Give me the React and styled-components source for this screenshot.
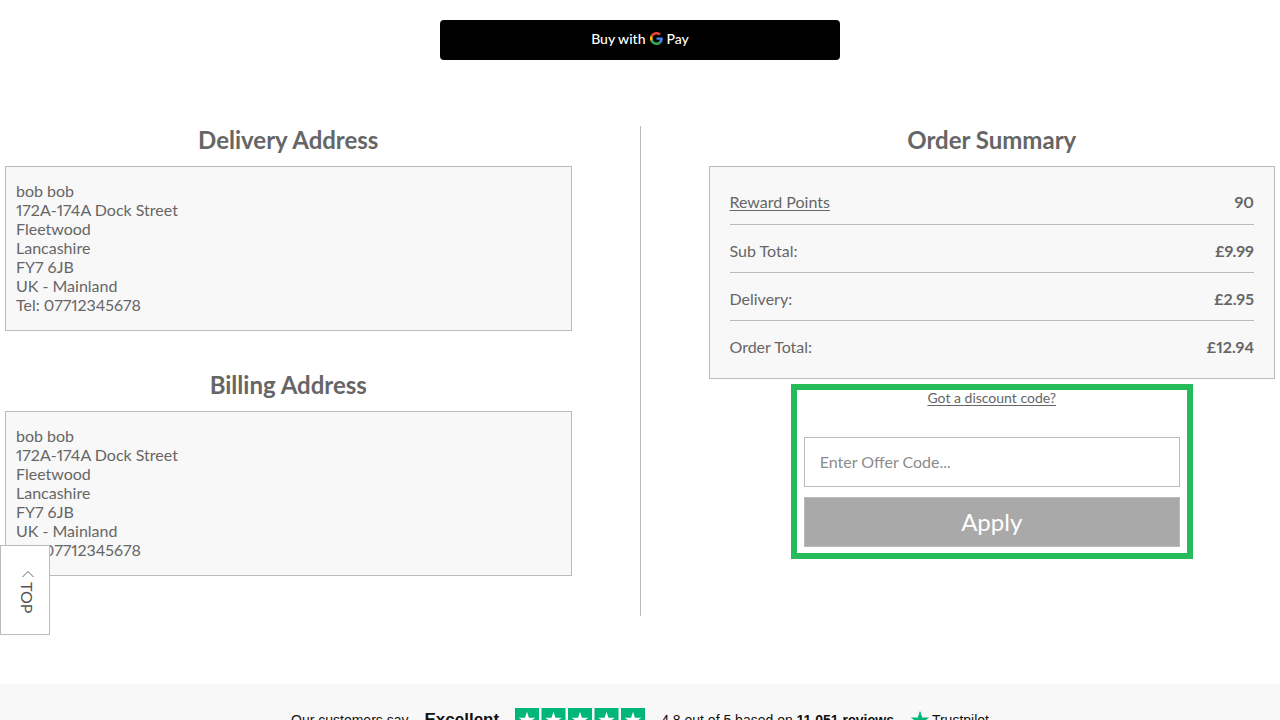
import React, { useState } from 'react';
import styled, { createGlobalStyle } from 'styled-components';

const GlobalStyle = createGlobalStyle`
  html {
    scrollbar-width: none;
  }
  body {
    margin: 0;
    background: #fff;
    color: #666;
    font-family: Lato, 'Open Sans', sans-serif;
    font-size: 16px;
    font-variant-numeric: proportional-nums;
    line-height: 19px;
  }
  * {
    box-sizing: border-box;
  }
`;

const PayButton = styled.button`
  display: flex;
  justify-content: center;
  align-items: center;
  gap: 5px;
  width: calc(100% - 40px);
  max-width: 400px;
  height: 40px;
  margin: 20px auto 66px;
  padding: 0 0 4px;
  border: none;
  border-radius: 4px;
  background: #000;
  color: #fff;
  font-family: Lato, sans-serif;
  font-size: 14px;
  font-weight: 500;
  cursor: pointer;
`;

const PayMark = styled.span`
  display: flex;
  align-items: center;
  gap: 3px;
`;

const Checkout = styled.main`
  display: grid;
  grid-template-columns: 1fr 1px 1fr;
  column-gap: 68px;
  padding: 0 5px;
  margin-bottom: 68px;
`;

const Column = styled.div`
  min-width: 0;
`;

const Divider = styled.div`
  background: #bbb;
`;

const Section = styled.section`
  margin-bottom: 40px;
`;

const Title = styled.h2`
  margin: 0;
  padding-bottom: 12px;
  font-size: 24px;
  line-height: 28px;
  font-weight: 700;
  text-align: center;
`;

const AddressBox = styled.address`
  padding: 14px 10px 16px;
  border: 1px solid #bbb;
  background: #f8f8f8;
  font-style: normal;
`;

const SummaryBox = styled.div`
  padding: 9px 20px 10px;
  border: 1px solid #bbb;
  background: #f8f8f8;
`;

const SummaryTable = styled.table`
  width: 100%;
  border-collapse: collapse;
`;

const SummaryRow = styled.tr`
  height: 48px;

  & + & {
    border-top: 1px solid #bbb;
  }
`;

const Label = styled.th`
  padding: 4px 0 0;
  font-weight: 400;
  text-align: left;
`;

const Amount = styled.td`
  padding: 4px 0 0;
  font-weight: 700;
  text-align: right;
`;

const TextLink = styled.a`
  color: inherit;
  text-decoration: underline;
  text-underline-offset: 2px;
`;

const Discount = styled.form`
  display: flex;
  flex-direction: column;
  max-width: 402px;
  margin: 5px auto 0;
  padding: 0 7px 6px;
  border: 6px solid #26bb5b;
`;

const DiscountLink = styled(TextLink)`
  align-self: center;
  margin-bottom: 31px;
  font-size: 14px;
  line-height: 16px;
`;

const CodeInput = styled.input`
  width: 100%;
  height: 50px;
  margin-bottom: 10px;
  padding: 0 15px 2px;
  border: 1px solid #bbb;
  border-radius: 0;
  background: #fff;
  color: #666;
  font-family: inherit;
  font-size: 16px;

  &::placeholder {
    color: #8c8c8c;
    opacity: 1;
  }
`;

const ApplyButton = styled.button`
  height: 50px;
  padding: 0 0 2px;
  border: 1px solid #bbb;
  background: #a9a9a9;
  color: #fff;
  font-family: inherit;
  font-size: 24px;
  cursor: pointer;
`;

const TopLink = styled.a`
  position: fixed;
  left: 0;
  bottom: 85px;
  display: flex;
  flex-direction: column;
  align-items: center;
  gap: 4px;
  width: 50px;
  height: 90px;
  padding: 24px 0 0 5px;
  border: 1px solid #bbb;
  background: #fff;
  color: #555;
  font-size: 16px;
  text-decoration: none;
`;

const TopText = styled.span`
  writing-mode: vertical-rl;
`;

const Reviews = styled.footer`
  display: flex;
  justify-content: center;
  align-items: center;
  gap: 16px;
  padding: 24px 0;
  background: #f8f8f8;
  color: #111;
  font-family: 'Liberation Sans', Arial, sans-serif;
  font-size: 14px;
  line-height: 24px;
`;

const Rating = styled.strong`
  font-size: 17px;
`;

const Brand = styled.span`
  display: flex;
  align-items: center;
  gap: 2px;
`;

const address = [
  'bob bob',
  '172A-174A Dock Street',
  'Fleetwood',
  'Lancashire',
  'FY7 6JB',
  'UK - Mainland',
  'Tel: 07712345678',
];

const totals = [
  { label: 'Sub Total:', value: '£9.99' },
  { label: 'Delivery:', value: '£2.95' },
  { label: 'Order Total:', value: '£12.94' },
];

const STAR = 'M12 1l2.6 8.1h8.5l-6.9 5 2.6 8.1L12 17.2l-6.8 5 2.6-8.1-6.9-5h8.5z';

const GoogleG = () => (
  <svg width="13" height="13" viewBox="0 0 48 48" aria-hidden="true">
    <path fill="#ea4335" d="M24 9.5c3.5 0 6.7 1.2 9.2 3.6l6.9-6.9C35.9 2.4 30.5 0 24 0 14.6 0 6.5 5.4 2.6 13.2l8 6.2C12.4 13.7 17.7 9.5 24 9.5z" />
    <path fill="#4285f4" d="M47 24.5c0-1.6-.2-3.1-.4-4.5H24v9h12.900c-.6 3-2.3 5.5-4.8 7.2l7.7 6C44.4 38 47 31.8 47 24.5z" />
    <path fill="#fbbc05" d="M10.5 28.6a14.5 14.5 0 0 1 0-9.2l-8-6.2a24 24 0 0 0 0 21.6z" />
    <path fill="#34a853" d="M24 48c6.5 0 11.9-2.1 15.9-5.8l-7.7-6c-2.2 1.5-4.9 2.3-8.2 2.3-6.3 0-11.6-4.2-13.5-9.9l-8 6.2C6.5 42.6 14.6 48 24 48z" />
  </svg>
);

const StarRating = () => (
  <svg width="130" height="24" viewBox="0 0 130 24" role="img" aria-label="4.8 stars">
    {[0, 1, 2, 3, 4].map((i) => (
      <g key={i} transform={`translate(${i * 26.5} 0)`}>
        <rect width="24" height="24" fill="#00b67a" />
        <path d={STAR} fill="#fff" transform="translate(3 3) scale(.75)" />
      </g>
    ))}
  </svg>
);

const AddressSection = ({ title }) => (
  <Section>
    <Title>{title}</Title>
    <AddressBox>
      {address.map((line) => (
        <div key={line}>{line}</div>
      ))}
    </AddressBox>
  </Section>
);

const App = () => {
  const [code, setCode] = useState('');

  return (
    <>
      <GlobalStyle />
      <PayButton type="button">
        Buy with
        <PayMark>
          <GoogleG />
          Pay
        </PayMark>
      </PayButton>

      <Checkout>
        <Column>
          <AddressSection title="Delivery Address" />
          <AddressSection title="Billing Address" />
        </Column>
        <Divider />
        <Column>
          <Title>Order Summary</Title>
          <SummaryBox>
            <SummaryTable>
              <tbody>
                <SummaryRow>
                  <Label scope="row">
                    <TextLink href="#rewards">Reward Points</TextLink>
                  </Label>
                  <Amount>90</Amount>
                </SummaryRow>
                {totals.map((row) => (
                  <SummaryRow key={row.label}>
                    <Label scope="row">{row.label}</Label>
                    <Amount>{row.value}</Amount>
                  </SummaryRow>
                ))}
              </tbody>
            </SummaryTable>
          </SummaryBox>
          <Discount onSubmit={(e) => e.preventDefault()}>
            <DiscountLink href="#discount">Got a discount code?</DiscountLink>
            <CodeInput
              aria-label="Offer code"
              placeholder="Enter Offer Code..."
              value={code}
              onChange={(e) => setCode(e.target.value)}
            />
            <ApplyButton type="submit">Apply</ApplyButton>
          </Discount>
        </Column>
      </Checkout>

      <Reviews>
        <span>Our customers say</span>
        <Rating>Excellent</Rating>
        <StarRating />
        <span>
          4.8 out of 5 based on <strong>11,051 reviews</strong>
        </span>
        <Brand>
          <svg width="20" height="20" viewBox="0 0 24 24" aria-hidden="true">
            <path d={STAR} fill="#00b67a" />
          </svg>
          Trustpilot
        </Brand>
      </Reviews>

      <TopLink href="#top">
        <svg width="12" height="8" viewBox="0 0 12 8" fill="none" stroke="#666" aria-hidden="true">
          <path d="M.5 7L6 1.5 11.5 7" />
        </svg>
        <TopText>TOP</TopText>
      </TopLink>
    </>
  );
};

export default App;
